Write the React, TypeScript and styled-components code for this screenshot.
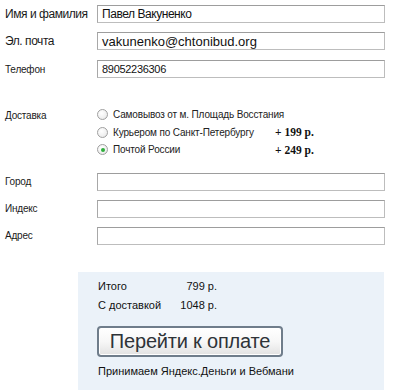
import React from "react";
import styled, { createGlobalStyle } from "styled-components";

const Global = createGlobalStyle`
  html, body { margin: 0; padding: 0; background: #fff; }
  body { font-family: "Liberation Sans", Arial, sans-serif; color: #000; }
`;

const Page = styled.div`
  width: 400px;
  height: 390px;
  overflow: hidden;
  padding: 5px 0 0 5px;
  box-sizing: border-box;
`;

const Row = styled.div<{ $mt?: number }>`
  display: grid;
  grid-template-columns: 92px 288px;
  align-items: center;
  height: 18px;
  margin-top: ${(p) => p.$mt ?? 0}px;
`;

const Label = styled.div<{ $big?: boolean }>`
  font-size: ${(p) => (p.$big ? 12 : 10)}px;
  letter-spacing: ${(p) => (p.$big ? -0.45 : -0.2)}px;
  color: #1a1a1a;
  white-space: nowrap;
`;

const Input = styled.div<{ $size?: number; $ls?: number }>`
  height: 18px;
  box-sizing: border-box;
  border: 1px solid #bdbdbd;
  border-top-color: #9d9d9d;
  border-left-color: #a8a8a8;
  background: #fff;
  font-size: ${(p) => p.$size ?? 13}px;
  letter-spacing: ${(p) => p.$ls ?? 0}px;
  padding-left: 4px;
  display: flex;
  align-items: center;
  color: #111;
  white-space: nowrap;
`;

const DeliveryRow = styled.div`
  display: grid;
  grid-template-columns: 92px 1fr;
  margin-top: 28px;
`;

const DeliveryLabel = styled(Label)`
  line-height: 17px;
  margin-top: 1px;
`;

const Options = styled.div`
  display: flex;
  flex-direction: column;
`;

const Option = styled.div`
  display: grid;
  grid-template-columns: 16px 162px auto;
  align-items: center;
  height: 17.5px;
  font-size: 10px;
  letter-spacing: -0.15px;
  color: #222;
  white-space: nowrap;
`;

const Radio = styled.span<{ $checked?: boolean }>`
  width: 11px;
  height: 11px;
  box-sizing: border-box;
  border-radius: 50%;
  border: 1px solid #a0a0a0;
  background: radial-gradient(circle at 40% 35%, #ffffff 0%, #f0f0f0 60%, #dedede 100%);
  display: flex;
  align-items: center;
  justify-content: center;
  &::after {
    content: "";
    display: ${(p) => (p.$checked ? "block" : "none")};
    width: 4px;
    height: 4px;
    border-radius: 50%;
    background: #2fae3c;
  }
`;

const Price = styled.span`
  font-family: "Liberation Serif", "Times New Roman", serif;
  font-weight: bold;
  font-size: 11.5px;
  letter-spacing: 0;
  color: #111;
  white-space: nowrap;
`;

const Summary = styled.div`
  margin: 27px 0 0 73px;
  width: 306px;
  height: 130px;
  background: #ebf2f9;
  padding: 8px 0 0 20px;
  box-sizing: border-box;
`;

const TotalsGrid = styled.div`
  display: grid;
  grid-template-columns: 1fr auto;
  row-gap: 6px;
  font-size: 11px;
  color: #111;
  width: 119px;
`;

const TotalName = styled.span`
  line-height: 13px;
`;

const TotalValue = styled.span`
  line-height: 13px;
  text-align: right;
`;

const PayButton = styled.div`
  margin-top: 14px;
  margin-left: -1px;
  width: 186px;
  height: 31px;
  box-sizing: border-box;
  border: 2px solid #6f7d8b;
  border-radius: 4px;
  background: linear-gradient(#ffffff 0%, #f7f7f7 50%, #e2e2e2 100%);
  box-shadow: inset 0 0 0 1px #fff;
  display: flex;
  align-items: center;
  justify-content: center;
  font-size: 20px;
  letter-spacing: -0.2px;
  color: #2e3338;
`;

const Accept = styled.div`
  margin-top: 8px;
  font-size: 11px;
  color: #111;
`;

export default function App() {
  return (
    <>
      <Global />
      <Page>
        <Row>
          <Label $big>Имя и фамилия</Label>
          <Input $size={12} $ls={-0.45}>Павел Вакуненко</Input>
        </Row>
        <Row $mt={9}>
          <Label $big>Эл. почта</Label>
          <Input>vakunenko@chtonibud.org</Input>
        </Row>
        <Row $mt={10}>
          <Label>Телефон</Label>
          <Input $size={11} $ls={-0.3}>89052236306</Input>
        </Row>
        <DeliveryRow>
          <DeliveryLabel>Доставка</DeliveryLabel>
          <Options>
            <Option>
              <Radio />
              <span>Самовывоз от м. Площадь Восстания</span>
              <span />
            </Option>
            <Option>
              <Radio />
              <span>Курьером по Санкт-Петербургу</span>
              <Price>+ 199 р.</Price>
            </Option>
            <Option>
              <Radio $checked />
              <span>Почтой России</span>
              <Price>+ 249 р.</Price>
            </Option>
          </Options>
        </DeliveryRow>
        <Row $mt={14}>
          <Label>Город</Label>
          <Input />
        </Row>
        <Row $mt={9}>
          <Label>Индекс</Label>
          <Input />
        </Row>
        <Row $mt={9}>
          <Label>Адрес</Label>
          <Input />
        </Row>
        <Summary>
          <TotalsGrid>
            <TotalName>Итого</TotalName>
            <TotalValue>799 р.</TotalValue>
            <TotalName>С доставкой</TotalName>
            <TotalValue>1048 р.</TotalValue>
          </TotalsGrid>
          <PayButton>Перейти к оплате</PayButton>
          <Accept>Принимаем Яндекс.Деньги и Вебмани</Accept>
        </Summary>
      </Page>
    </>
  );
}
